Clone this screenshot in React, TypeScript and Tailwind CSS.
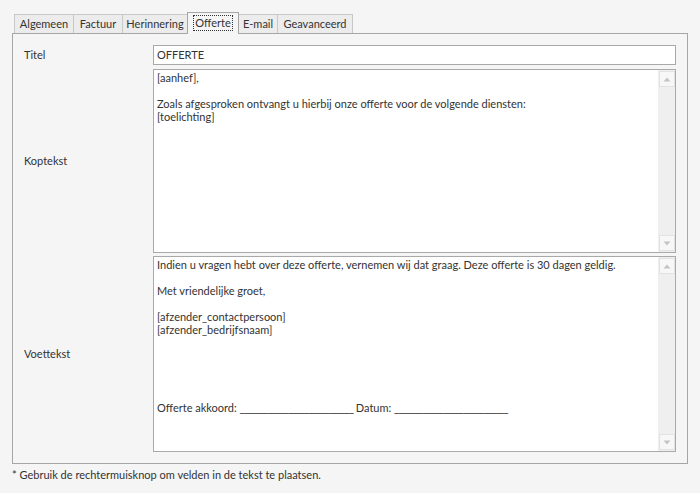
import React from "react";

const tabs = [
  { label: "Algemeen", w: "w-[60px]" },
  { label: "Factuur", w: "w-[50px]" },
  { label: "Herinnering", w: "w-[66px]" },
  { label: "Offerte", w: "w-[52px]", active: true },
  { label: "E-mail", w: "w-[40px]" },
  { label: "Geavanceerd", w: "w-[76px]" },
];

function ScrollBar() {
  return (
    <div className="w-[17px] shrink-0 h-full bg-[#efefef] flex flex-col justify-between items-center py-[1px]">
      <div className="w-[16px] h-[16px] bg-[#f7f7f7] border border-[#e2e2e2] flex items-center justify-center">
        <svg width="8" height="5" viewBox="0 0 8 5">
          <path d="M4 0.5 L7.5 4.5 L0.5 4.5 Z" fill="#c4c4c4" />
        </svg>
      </div>
      <div className="w-[16px] h-[16px] bg-[#f7f7f7] border border-[#e2e2e2] flex items-center justify-center">
        <svg width="8" height="5" viewBox="0 0 8 5">
          <path d="M0.5 0.5 L7.5 0.5 L4 4.5 Z" fill="#c4c4c4" />
        </svg>
      </div>
    </div>
  );
}

function Line() {
  return <span className="tracking-[-1px] text-[#222]">____________________________</span>;
}

function Memo({ lines, h }: { lines: React.ReactNode[]; h: string }) {
  return (
    <div className={`flex border border-[#a9a9a9] bg-white ${h}`}>
      <div className="flex-1 min-w-0 overflow-hidden pl-[3px] pt-[1px] leading-[13px] text-[#333]">
        {lines.map((l, i) => (
          <div key={i} className="h-[13px] whitespace-pre">
            {l}
          </div>
        ))}
      </div>
      <ScrollBar />
    </div>
  );
}

export default function App() {
  return (
    <div className="w-[700px] h-[493px] bg-[#f5f5f5] text-[11px] text-[#333] font-['Segoe_UI','Lato','Open_Sans',sans-serif] overflow-hidden">
      <div className="pl-[12px] pt-[12px]">
        <div className="flex items-end h-[21px] pl-[2px]">
          {tabs.map((t) =>
            t.active ? (
              <div
                key={t.label}
                className={`${t.w} -ml-px relative z-10 h-[22px] -mb-px bg-[#f5f5f5] border-l border-t border-r border-[#a6a6a6] flex items-start justify-center pt-[2px]`}
              >
                <span className="border border-dotted border-[#333] px-[1px] leading-[14px]">
                  {t.label}
                </span>
              </div>
            ) : (
              <div
                key={t.label}
                className={`${t.w} first:ml-0 -ml-px h-[19px] bg-[#ececec] border-l border-t border-r border-[#c8c8c8] flex items-center justify-center leading-[14px]`}
              >
                {t.label}
              </div>
            )
          )}
        </div>
        <div className="w-[676px] h-[431px] border border-[#a6a6a6] pt-[11px] pl-[11px]">
          <div className="grid grid-cols-[129px_523px] gap-y-[3px]">
            <div className="flex items-center h-[20px]">Titel</div>
            <div className="h-[20px] border border-[#a9a9a9] bg-white pl-[3px] flex items-center text-[#333]">
              OFFERTE
            </div>
            <div className="flex items-center mt-[1px]">Koptekst</div>
            <div className="mt-[1px]">
              <Memo
                h="h-[184px]"
                lines={[
                  "[aanhef],",
                  "",
                  "Zoals afgesproken ontvangt u hierbij onze offerte voor de volgende diensten:",
                  "[toelichting]",
                ]}
              />
            </div>
            <div className="flex items-center">Voettekst</div>
            <Memo
              h="h-[196px]"
              lines={[
                "Indien u vragen hebt over deze offerte, vernemen wij dat graag. Deze offerte is 30 dagen geldig.",
                "",
                "Met vriendelijke groet,",
                "",
                "[afzender_contactpersoon]",
                "[afzender_bedrijfsnaam]",
                "",
                "",
                "",
                "",
                "",
                <>
                  Offerte akkoord: <Line /> Datum: <Line />
                </>,
              ]}
            />
          </div>
        </div>
        <div className="pt-[4px] leading-[14px]">
          * Gebruik de rechtermuisknop om velden in de tekst te plaatsen.
        </div>
      </div>
    </div>
  );
}
